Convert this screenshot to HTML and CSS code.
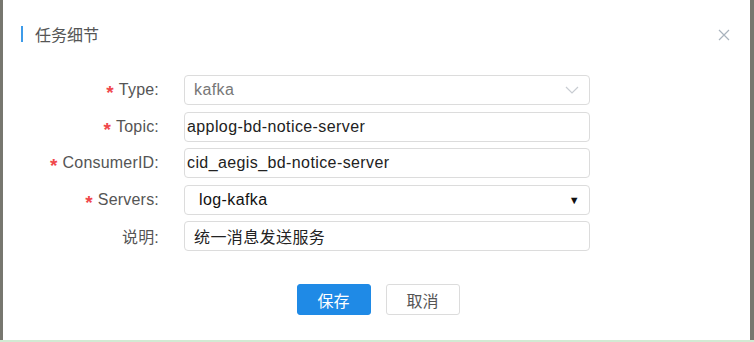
FILE: index.html
```html
<!DOCTYPE html>
<html lang="zh-CN">
<head>
    <meta charset="UTF-8">
    <title>任务细节</title>
    <link rel="stylesheet" href="styles.css">
</head>
<body>

<div class="screen">
    <div class="main">
        <div class="edge edge-left"></div>

        <!-- Dialog -->
        <div class="dialog">
            <div class="dialog-head">
                <div class="title"><span class="title-bar"></span>任务细节</div>
                <svg class="close" width="12" height="12" viewBox="0 0 12 12">
                    <path d="M1 1 L11 11 M11 1 L1 11" stroke="#a9b3bd" stroke-width="1.2" fill="none"/>
                </svg>
            </div>

            <div class="form">
                <div class="label"><span class="req">*</span>Type:</div>
                <div class="field field-disabled">
                    <span>kafka</span>
                    <svg width="14" height="8" viewBox="0 0 14 8">
                        <polyline points="1,1 7,7 13,1" stroke="#c8ccd2" stroke-width="1.2" fill="none"/>
                    </svg>
                </div>

                <div class="label"><span class="req">*</span>Topic:</div>
                <div class="field field-tight">applog-bd-notice-server</div>

                <div class="label"><span class="req">*</span>ConsumerID:</div>
                <div class="field field-tight">cid_aegis_bd-notice-server</div>

                <div class="label"><span class="req">*</span>Servers:</div>
                <div class="field field-select">
                    <span>log-kafka</span>
                    <span class="caret">▼</span>
                </div>

                <div class="label">说明:</div>
                <div class="field">统一消息发送服务</div>
            </div>

            <div class="actions">
                <button class="btn btn-primary">保存</button>
                <button class="btn">取消</button>
            </div>
        </div>

        <div class="edge edge-right"></div>
    </div>
    <div class="status-line"></div>
</div>

</body>
</html>
```

FILE: styles.css
```css
body {
    font-family: "Liberation Sans", Arial, "Noto Sans CJK SC", sans-serif;
    margin: 0;
    padding: 0;
    background: #fff;
}
.screen {
    width: 754px;
    height: 342px;
    display: flex;
    flex-direction: column;
}
.main {
    display: flex;
    height: 340px;
}
.edge {
    background: #77776f;
}
.edge-left {
    width: 3px;
}
.edge-right {
    width: 4px;
}
.status-line {
    height: 2px;
    background: #d2ead3;
}

.dialog {
    flex: 1;
    background: #fff;
    display: flex;
    flex-direction: column;
}
.dialog-head {
    display: flex;
    justify-content: space-between;
    align-items: center;
    padding: 24px 20px 0 18px;
    height: 20px;
}
.title {
    display: flex;
    align-items: center;
    font-family: "Noto Sans CJK SC", sans-serif;
    font-size: 16px;
    color: #555;
}
.title-bar {
    width: 2px;
    height: 16px;
    background: #3d9be9;
    margin-right: 12px;
}
.close {
    margin-top: 2px;
}

.form {
    display: grid;
    grid-template-columns: 156px 406px;
    column-gap: 25px;
    row-gap: 6.5px;
    margin-top: 31px;
}
.label {
    height: 30px;
    display: flex;
    align-items: center;
    justify-content: flex-end;
    font-size: 16px;
    color: #555;
    letter-spacing: 0.2px;
}
.req {
    color: #f0474b;
    font-size: 19px;
    font-weight: bold;
    margin-right: 5px;
    margin-top: 6px;
}
.field {
    height: 30px;
    box-sizing: border-box;
    border: 1px solid #dcdcdc;
    border-radius: 4px;
    display: flex;
    align-items: center;
    justify-content: space-between;
    padding: 0 10px 0 9px;
    font-size: 16px;
    letter-spacing: 0.4px;
    color: #222;
}
.field-tight {
    padding-left: 2px;
}
.field-disabled {
    color: #777;
}
.field-select {
    padding-left: 14px;
    padding-right: 9px;
    color: #111;
}
.caret {
    font-size: 11px;
    color: #111;
}

.actions {
    display: flex;
    justify-content: center;
    gap: 15px;
    margin-top: 33px;
    padding-left: 3px;
}
.btn {
    width: 74px;
    height: 31px;
    border: 1px solid #dcdcdc;
    border-radius: 3px;
    background: #fff;
    color: #555;
    font-family: "Noto Sans CJK SC", sans-serif;
    font-size: 16px;
    cursor: pointer;
}
.btn-primary {
    background: #1f8ae6;
    border-color: #1f8ae6;
    color: #fff;
}
```
